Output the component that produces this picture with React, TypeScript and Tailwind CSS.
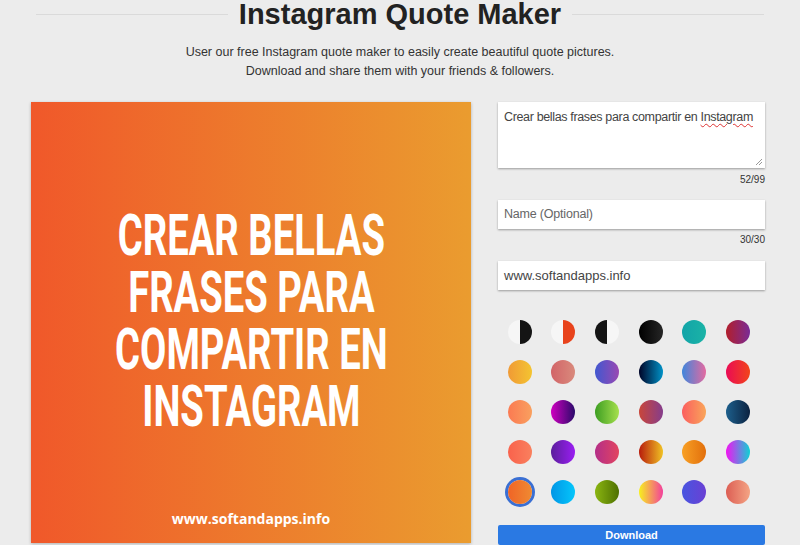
import React from "react";

const swatchClasses: string[] = [
  "bg-[linear-gradient(to_right,#f6f6f6_50%,#141414_50%)]",
  "bg-[linear-gradient(to_right,#f6f6f6_50%,#e8431c_50%)]",
  "bg-[linear-gradient(to_right,#141414_50%,#f6f6f6_50%)]",
  "bg-[linear-gradient(to_right,#000000,#262626)]",
  "bg-[linear-gradient(to_right,#12a4a8,#1bb3a6)]",
  "bg-[linear-gradient(to_right,#b21f2b,#7a2b96)]",

  "bg-[linear-gradient(to_right,#f09a35,#f4c431)]",
  "bg-[linear-gradient(to_right,#d26468,#d98a7c)]",
  "bg-[linear-gradient(to_right,#4158d0,#9a48b2)]",
  "bg-[linear-gradient(to_right,#000428,#0092c7)]",
  "bg-[linear-gradient(to_right,#3f86dc,#e46aa0)]",
  "bg-[linear-gradient(to_right,#ea0b55,#f2451a)]",

  "bg-[linear-gradient(to_right,#fb7a52,#f9a05f)]",
  "bg-[linear-gradient(to_right,#d000c0,#2a0a6a)]",
  "bg-[linear-gradient(to_right,#3d9e22,#a6e04e)]",
  "bg-[linear-gradient(to_right,#c9463a,#853d8c)]",
  "bg-[linear-gradient(to_right,#fb5e5e,#f9a55a)]",
  "bg-[linear-gradient(to_right,#1d5f8c,#0b2240)]",

  "bg-[linear-gradient(to_right,#f9624c,#f9805e)]",
  "bg-[linear-gradient(to_right,#5b1e9c,#9a1ef2)]",
  "bg-[linear-gradient(to_right,#b42e88,#e24460)]",
  "bg-[linear-gradient(to_right,#b81c0c,#f0c224)]",
  "bg-[linear-gradient(to_right,#f8a024,#e26f0c)]",
  "bg-[linear-gradient(to_right,#f313f2,#0ed2d4)]",

  "bg-[linear-gradient(to_right,#f06426,#ef8a32)]",
  "bg-[linear-gradient(to_right,#0096e6,#05c6fb)]",
  "bg-[linear-gradient(to_right,#8ab511,#4e7001)]",
  "bg-[linear-gradient(to_right,#f7f01e,#f3409c)]",
  "bg-[linear-gradient(to_right,#4855e0,#6a40d4)]",
  "bg-[linear-gradient(to_right,#dc5e54,#f4a484)]",
];

export default function App() {
  return (
    <div className="min-h-[545px] w-[800px] bg-[#ececec] font-['Liberation_Sans',Arial,sans-serif] text-[#333] overflow-hidden">
      {/* Header */}
      <div className="flex items-center gap-[11px] px-[36px]">
        <div className="h-px flex-1 bg-[#dadada]" />
        <h1 className="text-[29px] leading-[28px] font-bold text-[#222] whitespace-nowrap">
          Instagram Quote Maker
        </h1>
        <div className="h-px flex-1 bg-[#dadada]" />
      </div>
      <div className="mt-[15px] text-center text-[12.5px] leading-[19px] text-[#333]">
        <p>User our free Instagram quote maker to easily create beautiful quote pictures.</p>
        <p>Download and share them with your friends &amp; followers.</p>
      </div>

      {/* Body */}
      <div className="mt-[21px] flex gap-[27px] pl-[31px]">
        {/* Quote image */}
        <div className="flex h-[441px] w-[440px] flex-col bg-[linear-gradient(to_right,#f0582a,#ea9c2f)] shadow-[0_1px_3px_rgba(0,0,0,0.25)]">
          <div className="flex flex-1 flex-col items-center justify-center pt-[30px]">
            <div className="scale-x-[0.67] text-center font-['Roboto',sans-serif] text-[57px] leading-[57px] font-bold text-white whitespace-nowrap">
              <div>CREAR BELLAS</div>
              <div>FRASES PARA</div>
              <div>COMPARTIR EN</div>
              <div>INSTAGRAM</div>
            </div>
          </div>
          <div className="pb-[15px] text-center font-['Open_Sans',sans-serif] text-[14px] leading-[18px] font-bold text-white">
            www.softandapps.info
          </div>
        </div>

        {/* Controls */}
        <div className="flex w-[267px] flex-col">
          <div className="relative h-[66px] bg-white px-[6px] pt-[7px] text-[12.5px] leading-[16px] tracking-[-0.35px] text-[#444] shadow-[0_1px_2px_rgba(0,0,0,0.35)]">
            Crear bellas frases para compartir en{" "}
            <span className="underline decoration-wavy decoration-[#d33] decoration-1 underline-offset-2">Instagram</span>
            <svg className="absolute right-[2px] bottom-[2px]" width="8" height="8" viewBox="0 0 8 8">
              <path d="M7 1L1 7M7 4L4 7" stroke="#999" strokeWidth="1" />
            </svg>
          </div>
          <div className="mt-[6px] text-right text-[10px] leading-[12px] text-[#333]">52/99</div>

          <div className="mt-[14px] flex h-[29px] items-center bg-white px-[6px] text-[12.5px] tracking-[-0.2px] text-[#666] shadow-[0_1px_2px_rgba(0,0,0,0.35)]">
            Name (Optional)
          </div>
          <div className="mt-[5px] text-right text-[10px] leading-[12px] text-[#333]">30/30</div>

          <div className="mt-[15px] flex h-[29px] items-center bg-white px-[6px] text-[13px] text-[#444] shadow-[0_1px_2px_rgba(0,0,0,0.35)]">
            www.softandapps.info
          </div>

          <div className="mt-[30px] grid w-[262px] grid-cols-6 gap-y-[16px]">
            {swatchClasses.map((c, i) => (
              <div key={i} className="flex justify-center">
                <div
                  className={
                    "h-[24px] w-[24px] rounded-full " +
                    c +
                    (i === 24 ? " ring-[3px] ring-[#3a6fd3]" : "")
                  }
                />
              </div>
            ))}
          </div>

          <button className="mt-[21px] h-[20px] w-full rounded-[2px] bg-[#2a79e3] text-[11px] font-bold text-white">
            Download
          </button>
        </div>
      </div>
    </div>
  );
}
